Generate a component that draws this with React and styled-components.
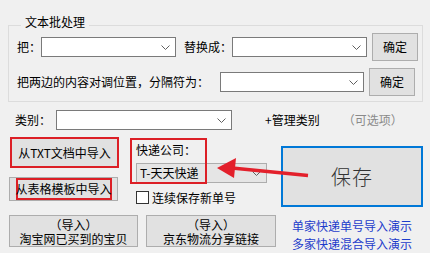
import React from 'react';
import styled, { createGlobalStyle } from 'styled-components';

// -------- Global -------------- //

const GlobalStyle = createGlobalStyle`
    html, body {
        margin: 0;
        padding: 0;
        background: #f0f0f0;
    }

    * {
        box-sizing: border-box;
    }
`;

// -------- Styled Components -------------- //

const Window = styled.div`
    position: relative;
    width: 430px;
    height: 253px;
    overflow: hidden;
    background: #f0f0f0;
    color: #000;
    font-family: 'Noto Sans CJK SC', 'Noto Sans', sans-serif;
    font-size: 12px;
    line-height: 18px;
`;

const GroupBox = styled.fieldset`
    margin: 15px 7px 0 8px;
    padding: 0 7px 5px 8px;
    min-width: 0;
    border: 1px solid #dcdcdc;
`;

const GroupTitle = styled.legend`
    margin-left: 4px;
    padding: 0 4px 6px;
    line-height: 14px;
    font-size: 12px;
`;

const FormRow = styled.div`
    display: flex;
    align-items: center;
    height: 28px;
    margin-top: ${props => props.$top || 0}px;
`;

const Label = styled.span`
    flex: none;
    width: ${props => (props.$width ? `${props.$width}px` : 'auto')};
    margin-left: ${props => props.$left || 0}px;
    white-space: nowrap;
`;

const Combo = styled.div`
    flex: none;
    display: flex;
    align-items: center;
    justify-content: space-between;
    width: ${props => props.$width}px;
    height: 20px;
    margin-left: ${props => (props.$auto ? 'auto' : '0')};
    margin-top: ${props => props.$top || 0}px;
    padding: 0 5px 0 3px;
    border: 1px solid ${props => (props.$flat ? '#adadad' : '#7a7a7a')};
    background: ${props => (props.$flat ? '#e5e5e5' : '#ffffff')};
    white-space: nowrap;
`;

const Button = styled.div`
    flex: none;
    display: flex;
    align-items: center;
    justify-content: center;
    width: 46px;
    height: 28px;
    margin-left: 5px;
    border: 1px solid #adadad;
    background: #e1e1e1;
`;

const CategoryRow = styled.div`
    display: flex;
    align-items: center;
    height: 20px;
    margin: 8px 0 0 15px;
`;

const Muted = styled.span`
    margin-left: 23px;
    color: #8a8a8a;
    white-space: nowrap;
`;

const Lower = styled.div`
    display: flex;
    margin: 7px 0 0 9px;
`;

const LeftPart = styled.div`
    width: 267px;
    display: flex;
    flex-direction: column;
`;

const TopBlock = styled.div`
    display: flex;
    height: 67px;
`;

const ImportColumn = styled.div`
    width: 111px;
    display: flex;
    flex-direction: column;
`;

const ImportButton = styled.div`
    display: flex;
    align-items: center;
    justify-content: center;
    width: 109px;
    height: ${props => (props.$marked ? 31 : 24)}px;
    margin-left: ${props => (props.$marked ? 1 : 0)}px;
    margin-top: ${props => props.$top || 0}px;
    border: ${props => (props.$marked ? '2px solid #dc1f26' : '1px solid #adadad')};
    background: #e1e1e1;
    white-space: nowrap;
`;

const MarkedText = styled.span`
    display: inline-block;
    width: 96px;
    height: 22px;
    line-height: 22px;
    text-align: center;
    box-shadow: inset 0 0 0 2px #dc1f26;
`;

const CourierColumn = styled.div`
    position: relative;
    margin-left: 16px;
    display: flex;
    flex-direction: column;
`;

const CourierLabel = styled.span`
    margin-top: 4px;
`;

const CourierMark = styled.div`
    position: absolute;
    left: -6px;
    top: 1px;
    width: 77px;
    height: 46px;
    border: 2px solid #dc1f26;
    pointer-events: none;
`;

const CheckRow = styled.label`
    display: flex;
    align-items: center;
    height: 13px;
    margin-top: 8px;
    gap: 3px;
`;

const CheckBox = styled.span`
    width: 13px;
    height: 13px;
    border: 1px solid #333;
    background: #fff;
`;

const BottomRow = styled.div`
    display: flex;
    gap: 8px;
    margin-top: 11px;
`;

const TwoLineButton = styled.div`
    display: flex;
    flex-direction: column;
    align-items: center;
    justify-content: center;
    width: ${props => props.$width}px;
    height: 32px;
    padding-top: 1px;
    line-height: 14px;
    border: 1px solid #adadad;
    background: #e1e1e1;
    white-space: nowrap;
`;

const RightPart = styled.div`
    margin-left: 5px;
    display: flex;
    flex-direction: column;
`;

const SaveButton = styled.div`
    display: flex;
    align-items: center;
    justify-content: center;
    width: 142px;
    height: 61px;
    margin-top: 9px;
    border: 2px solid #0078d7;
    background: #e1e1e1;
    color: #333333;
    font-size: 20px;
    font-weight: 300;
    letter-spacing: 1px;
`;

const DemoLinks = styled.div`
    display: flex;
    flex-direction: column;
    margin: 10px 0 0 11px;
    color: #1d3ccb;
    white-space: nowrap;
`;

const ArrowLayer = styled.svg`
    position: absolute;
    left: 0;
    top: 0;
    pointer-events: none;
`;

// -------- Small parts -------------- //

const Chevron = () => (
    <svg width="9" height="5" viewBox="0 0 9 5">
        <polyline
            points="0.5,0.5 4.5,4.5 8.5,0.5"
            fill="none"
            stroke="#606060"
            strokeWidth="1"
        />
    </svg>
);

// -------- App Component -------------- //

export default function App() {
    return (
        <Window>
            <GlobalStyle />
            <GroupBox>
                <GroupTitle>文本批处理</GroupTitle>
                <FormRow $top={-2}>
                    <Label $width={24}>把：</Label>
                    <Combo $width={135}>
                        <span />
                        <Chevron />
                    </Combo>
                    <Label $left={8}>替换成：</Label>
                    <Combo $width={135} $auto>
                        <span />
                        <Chevron />
                    </Combo>
                    <Button>确定</Button>
                </FormRow>
                <FormRow $top={7}>
                    <Label>把两边的内容对调位置，分隔符为：</Label>
                    <Combo $width={144} $auto>
                        <span />
                        <Chevron />
                    </Combo>
                    <Button>确定</Button>
                </FormRow>
            </GroupBox>

            <CategoryRow>
                <Label $width={41}>类别：</Label>
                <Combo $width={176}>
                    <span />
                    <Chevron />
                </Combo>
                <Label $left={33}>+管理类别</Label>
                <Muted>（可选项）</Muted>
            </CategoryRow>

            <Lower>
                <LeftPart>
                    <TopBlock>
                        <ImportColumn>
                            <ImportButton $marked>从TXT文档中导入</ImportButton>
                            <ImportButton $top={9}>
                                <MarkedText>从表格模板中导入</MarkedText>
                            </ImportButton>
                        </ImportColumn>
                        <CourierColumn>
                            <CourierLabel>快递公司：</CourierLabel>
                            <Combo $width={131} $flat $top={4}>
                                <span>T-天天快递</span>
                                <Chevron />
                            </Combo>
                            <CheckRow>
                                <CheckBox />
                                <span>连续保存新单号</span>
                            </CheckRow>
                            <CourierMark />
                        </CourierColumn>
                    </TopBlock>
                    <BottomRow>
                        <TwoLineButton $width={129}>
                            <span>（导入）</span>
                            <span>淘宝网已买到的宝贝</span>
                        </TwoLineButton>
                        <TwoLineButton $width={130}>
                            <span>（导入）</span>
                            <span>京东物流分享链接</span>
                        </TwoLineButton>
                    </BottomRow>
                </LeftPart>
                <RightPart>
                    <SaveButton>保存</SaveButton>
                    <DemoLinks>
                        <span>单家快递单号导入演示</span>
                        <span>多家快递混合导入演示</span>
                    </DemoLinks>
                </RightPart>
            </Lower>

            <ArrowLayer width="430" height="253" viewBox="0 0 430 253">
                <line
                    x1="232"
                    y1="168"
                    x2="308"
                    y2="175.5"
                    stroke="#e3202b"
                    strokeWidth="3.5"
                />
                <polygon points="217,168 236,158 234,178" fill="#e3202b" />
            </ArrowLayer>
        </Window>
    );
}
